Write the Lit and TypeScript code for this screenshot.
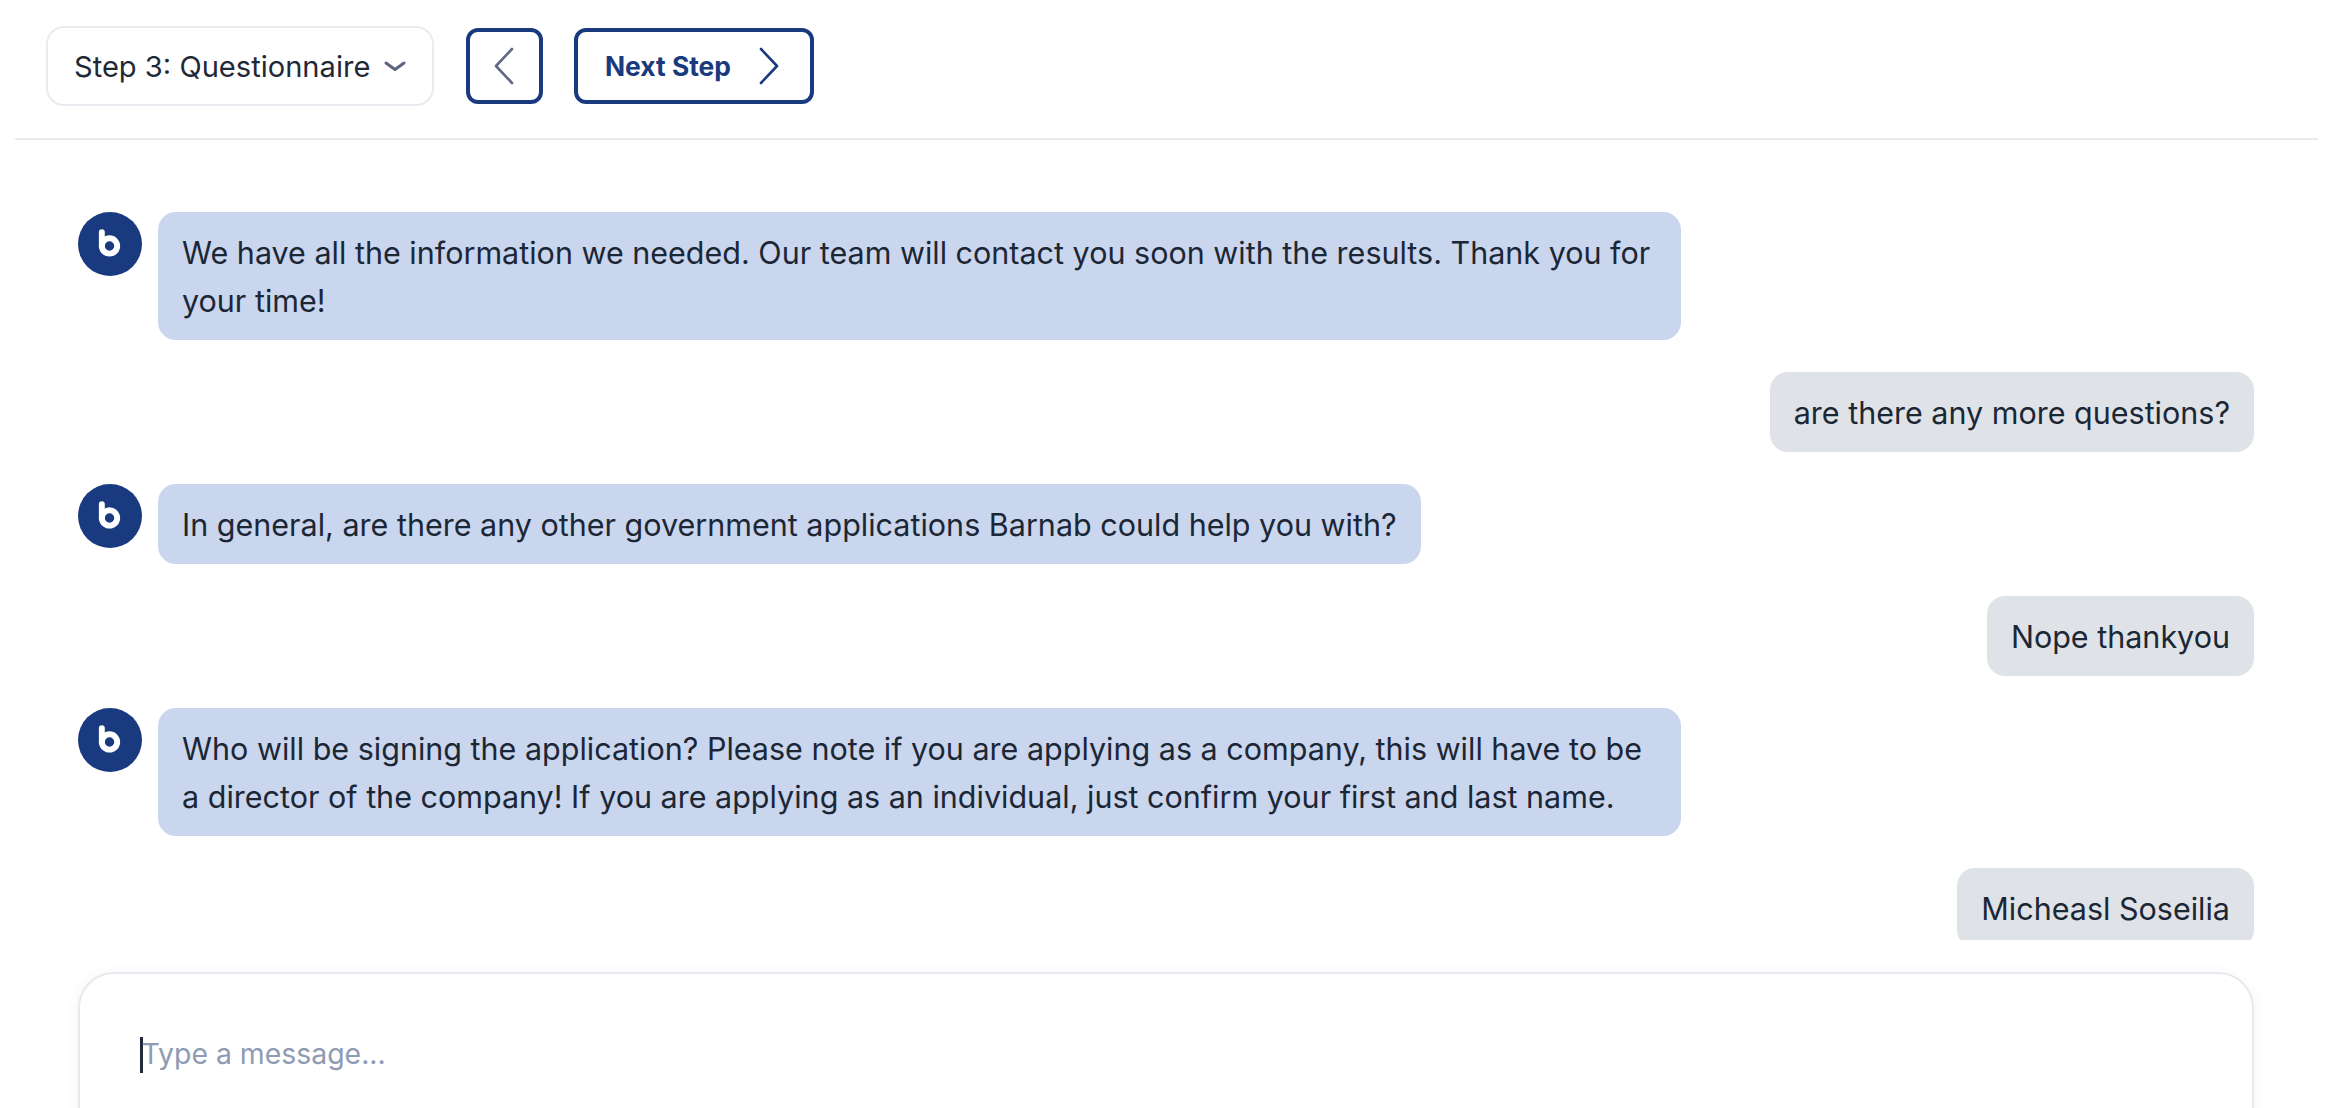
import { LitElement, html, css } from "lit";
import { customElement } from "lit/decorators.js";

type Msg = { from: "bot" | "user"; text: string };

const MESSAGES: Msg[] = [
  { from: "bot", text: "We have all the information we needed. Our team will contact you soon with the results. Thank you for your time!" },
  { from: "user", text: "are there any more questions?" },
  { from: "bot", text: "In general, are there any other government applications Barnab could help you with?" },
  { from: "user", text: "Nope thankyou" },
  { from: "bot", text: "Who will be signing the application? Please note if you are applying as a company, this will have to be a director of the company! If you are applying as an individual, just confirm your first and last name." },
  { from: "user", text: "Micheasl Soseilia" },
];

@customElement("app-root")
export class AppRoot extends LitElement {
  static styles = css`
    :host {
      display: flex;
      flex-direction: column;
      height: 1108px;
      overflow: hidden;
      background: #fff;
      font-family: Inter, "Liberation Sans", sans-serif;
      color: #1f2937;
      box-sizing: border-box;
    }
    * { box-sizing: border-box; }
    .toolbar {
      flex: none;
      display: flex;
      align-items: center;
      height: 140px;
      margin: 0 30px 0 15px;
      padding: 0 0 6px 31px;
      border-bottom: 2px solid #e8eaee;
    }
    .select {
      display: flex;
      align-items: center;
      justify-content: space-between;
      width: 388px;
      height: 80px;
      padding: 0 25px 0 26px;
      border: 2px solid #e8ebef;
      border-radius: 18px;
      font-size: 29.1px;
      color: #1f2937;
    }
    .select svg { width: 24px; height: 12px; }
    .btn {
      display: flex;
      align-items: center;
      height: 76px;
      border: 4px solid #1a3a7f;
      border-radius: 12px;
      background: #fff;
      color: #1a3a7f;
      font-weight: 700;
      font-size: 26.4px;
      font-family: inherit;
    }
    .prev { width: 77px; margin-left: 32px; justify-content: center; padding: 0 2px 0 0; }
    .next { width: 240px; margin-left: 31px; padding: 0 0 0 27px; gap: 26px; }
    .chev { width: 24px; height: 38px; flex: none; }
    .messages {
      flex: none;
      height: 800px;
      overflow: hidden;
      padding: 72px 94px 0 78px;
      display: flex;
      flex-direction: column;
      gap: 32px;
    }
    .row { display: flex; flex: none; align-items: flex-start; }
    .row.user { justify-content: flex-end; }
    .avatar { width: 64px; height: 64px; flex: none; margin-right: 16px; display: block; }
    .bubble {
      max-width: 1523px;
      padding: 17px 24px 15px;
      border-radius: 18px;
      font-size: 30.5px;
      line-height: 48px;
      color: #1c2736;
    }
    .bot .bubble { background: #cad6ee; }
    .user .bubble { background: #dfe3e8; }
    .composer {
      flex: none;
      height: 220px;
      margin: 32px 94px 0 78px;
      padding: 56px 60px;
      border: 2px solid #e6eaf0;
      border-radius: 36px;
      background: #fff;
      box-shadow: 0 2px 16px rgba(30, 41, 59, 0.05);
      display: flex;
      align-items: flex-start;
      font-size: 28.4px;
      line-height: 48px;
      color: #8e9bb3;
    }
    .caret { width: 2.5px; height: 36px; margin: 7px -1px 0 0; background: #1f2937; flex: none; }
  `;

  private avatar() {
    return html`<svg class="avatar" viewBox="0 0 65 65" aria-hidden="true">
      <circle cx="32.5" cy="32.5" r="32.5" fill="#1a3a7f"></circle>
      <circle cx="32" cy="34.5" r="7.8" fill="none" stroke="#fff" stroke-width="6"></circle>
      <path d="M24.2 20.5V34.5" fill="none" stroke="#fff" stroke-width="6" stroke-linecap="round"></path>
    </svg>`;
  }

  render() {
    return html`
      <div class="toolbar">
        <div class="select">
          <span>Step 3: Questionnaire</span>
          <svg viewBox="0 0 24 12" aria-hidden="true"><path d="M3 3l9 6.5L21 3" fill="none" stroke="#5b667c" stroke-width="3" stroke-linecap="round" stroke-linejoin="round"></path></svg>
        </div>
        <button class="btn prev" aria-label="Previous step">
          <svg class="chev" viewBox="0 0 24 38" aria-hidden="true"><path d="M20 2L4 19l16 17" fill="none" stroke="#5f6b85" stroke-width="2.6" stroke-linecap="round" stroke-linejoin="round"></path></svg>
        </button>
        <button class="btn next">
          <span>Next Step</span>
          <svg class="chev" viewBox="0 0 24 38" aria-hidden="true"><path d="M4 2l16 17L4 36" fill="none" stroke="#1a3a7f" stroke-width="2.6" stroke-linecap="round" stroke-linejoin="round"></path></svg>
        </button>
      </div>
      <div class="messages">
        ${MESSAGES.map(
          (m) => html`<div class="row ${m.from}">
            ${m.from === "bot" ? this.avatar() : ""}
            <div class="bubble">${m.text}</div>
          </div>`
        )}
      </div>
      <div class="composer"><span class="caret"></span><span>Type a message...</span></div>
    `;
  }
}
